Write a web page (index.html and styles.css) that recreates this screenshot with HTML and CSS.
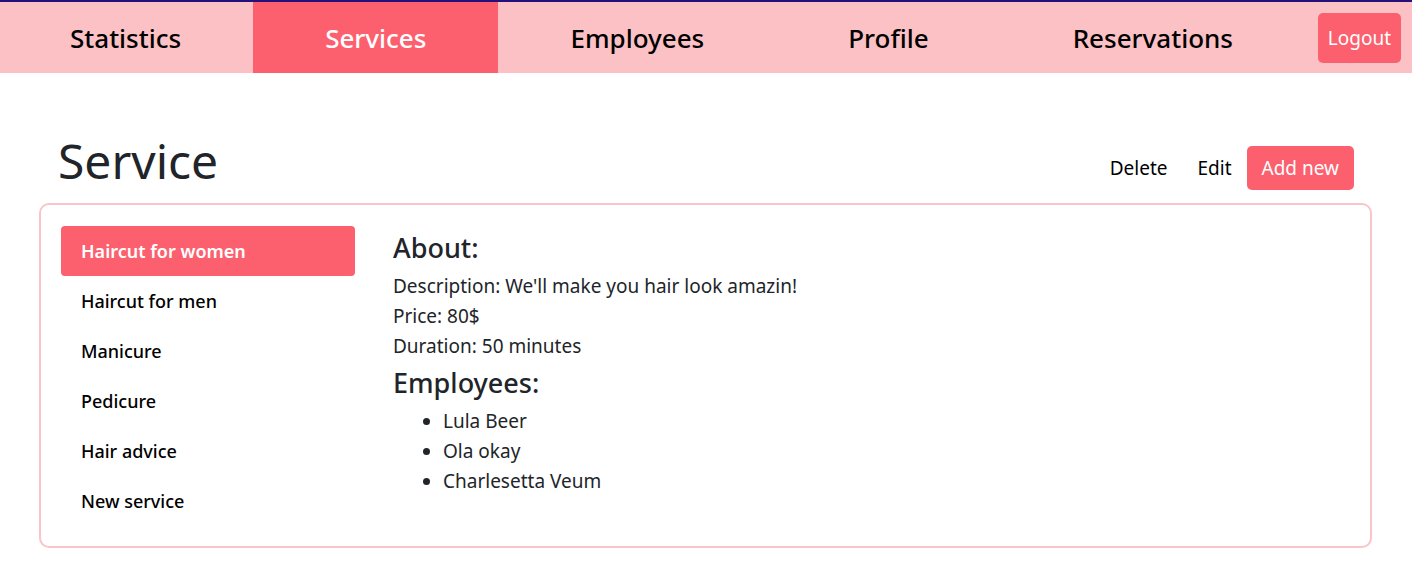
FILE: index.html
```html
<!DOCTYPE html>
<html lang="en">
<head>
<meta charset="utf-8">
<title>Service</title>
<link rel="stylesheet" href="styles.css">
</head>
<body>
<nav class="topnav">
  <a class="nav-item nav-first">Statistics</a>
  <a class="nav-item active">Services</a>
  <a class="nav-item">Employees</a>
  <a class="nav-item">Profile</a>
  <a class="nav-item">Reservations</a>
  <button class="logout">Logout</button>
</nav>
<main class="page">
  <header class="page-head">
    <h1 class="title">Service</h1>
    <div class="actions">
      <button class="btn-link">Delete</button>
      <button class="btn-link">Edit</button>
      <button class="btn-primary">Add new</button>
    </div>
  </header>
  <section class="card">
    <ul class="side-list">
      <li class="side-item active">Haircut for women</li>
      <li class="side-item">Haircut for men</li>
      <li class="side-item">Manicure</li>
      <li class="side-item">Pedicure</li>
      <li class="side-item">Hair advice</li>
      <li class="side-item">New service</li>
    </ul>
    <div class="details">
      <h2 class="sub">About:</h2>
      <p class="line">Description: We'll make you hair look amazin!</p>
      <p class="line">Price: 80$</p>
      <p class="line">Duration: 50 minutes</p>
      <h2 class="sub sub-next">Employees:</h2>
      <ul class="emp">
        <li>Lula Beer</li>
        <li>Ola okay</li>
        <li>Charlesetta Veum</li>
      </ul>
    </div>
  </section>
</main>
</body>
</html>
```
FILE: styles.css
```css
* { box-sizing: border-box; }
body {
  margin: 0;
  font-family: "Noto Sans", "Open Sans", sans-serif;
  color: #212529;
  background: #fff;
}
.topnav {
  display: flex;
  align-items: stretch;
  height: 73px;
  background: #fcc1c5;
  border-top: 2px solid #24127a;
}
.nav-item {
  display: flex;
  align-items: center;
  padding: 0 72px;
  font-size: 26px;
  font-weight: 500;
  color: #000;
  text-decoration: none;
}
.nav-first {
  padding-left: 70px;
}
.nav-item.active {
  background: #fc5f6e;
  color: #fff;
}
.logout {
  align-self: center;
  margin-left: auto;
  margin-right: 11px;
  height: 50px;
  padding: 0 10px;
  border: none;
  border-radius: 5px;
  background: #fc5f6e;
  color: #fff;
  font-family: "Noto Sans", sans-serif;
  font-size: 19px;
}
.page {
  padding: 59px 40px 0 39px;
}
.page-head {
  display: flex;
  align-items: flex-end;
  justify-content: space-between;
  padding: 0 18px 13px 19px;
}
.title {
  margin: 0;
  font-size: 48px;
  font-weight: 400;
  line-height: 1.2;
}
.actions {
  display: flex;
  align-items: center;
}
.btn-link, .btn-primary {
  border: none;
  background: none;
  font-family: "Noto Sans", sans-serif;
  font-size: 19px;
  color: #000;
  height: 44px;
  padding: 0 15px;
  border-radius: 5px;
}
.btn-primary {
  background: #fc5f6e;
  color: #fff;
}
.card {
  display: flex;
  border: 2px solid #fbc4c8;
  border-radius: 10px;
  padding: 21px 20px 20px 20px;
}
.side-list {
  list-style: none;
  margin: 0;
  padding: 0;
  width: 294px;
  flex: none;
}
.side-item {
  height: 50px;
  display: flex;
  align-items: center;
  padding: 0 20px;
  font-size: 18px;
  font-weight: 500;
  color: #000;
  border-radius: 4px;
}
.side-item.active {
  background: #fc5f6e;
  color: #fff;
  font-weight: 600;
}
.details {
  padding-left: 38px;
  padding-top: 4px;
}
.sub {
  margin: 0 0 5px;
  font-size: 27px;
  font-weight: 500;
  line-height: 36px;
}
.sub-next {
  margin-top: 4px;
}
.line {
  margin: 0;
  font-size: 19px;
  line-height: 30px;
}
.emp {
  margin: 0;
  padding-left: 50px;
  font-size: 19px;
  line-height: 30px;
}
```
